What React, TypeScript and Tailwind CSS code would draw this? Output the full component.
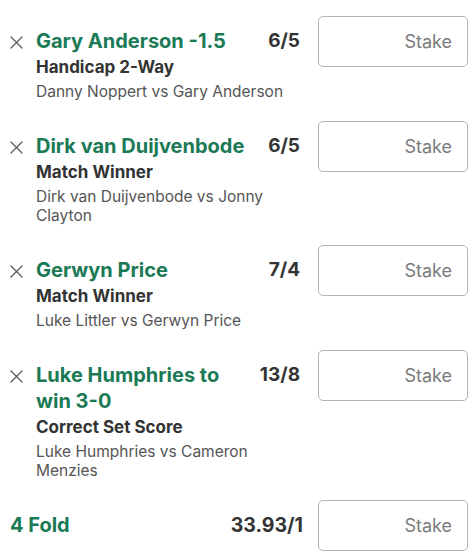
import React from "react";

type Selection = {
  title: string;
  market: string;
  event: string;
  odds: string;
};

const selections: Selection[] = [
  { title: "Gary Anderson -1.5", market: "Handicap 2-Way", event: "Danny Noppert vs Gary Anderson", odds: "6/5" },
  { title: "Dirk van Duijvenbode", market: "Match Winner", event: "Dirk van Duijvenbode vs Jonny Clayton", odds: "6/5" },
  { title: "Gerwyn Price", market: "Match Winner", event: "Luke Littler vs Gerwyn Price", odds: "7/4" },
  { title: "Luke Humphries to win 3-0", market: "Correct Set Score", event: "Luke Humphries vs Cameron Menzies", odds: "13/8" },
];

function CloseIcon() {
  return (
    <svg width="13" height="13" viewBox="0 0 13 13" fill="none" stroke="#5f5f5f" strokeWidth="1.4" strokeLinecap="round">
      <path d="M1 1 L12 12 M12 1 L1 12" />
    </svg>
  );
}

function StakeBox() {
  return (
    <div className="ml-[18px] h-[51px] w-[150px] shrink-0 rounded-[5px] border border-[#b3b3b3] bg-white">
      <input
        type="text"
        placeholder="Stake"
        className="h-full w-full bg-transparent pr-[15px] text-right text-[18px] text-[#333] outline-none placeholder:text-[#7b7b7b]"
      />
    </div>
  );
}

function SelectionRow({ s }: { s: Selection }) {
  return (
    <div className="flex items-start">
      <div className="w-[36px] shrink-0 pl-[10px] pt-[20px]">
        <CloseIcon />
      </div>
      <div className="w-[264px] shrink-0 pt-[12px] pb-[20px]">
        <div className="flex items-start">
          <div className="min-w-0 flex-1 pr-[10px] text-[20px] font-bold leading-[26px] text-[#1b7a56]">{s.title}</div>
          <div className="shrink-0 whitespace-nowrap text-right text-[19px] font-bold leading-[26px] text-[#333]">
            {s.odds}
          </div>
        </div>
        <div className="text-[17px] font-bold leading-[26px] text-[#333]">{s.market}</div>
        <div className="mt-[2px] text-[15.5px] leading-[19px] text-[#555]">{s.event}</div>
      </div>
      <StakeBox />
    </div>
  );
}

export default function App() {
  return (
    <div
      className="min-h-[560px] w-[475px] bg-white pt-[16px]"
      style={{ fontFamily: "Inter, 'Noto Sans', sans-serif" }}
    >
      {selections.map((s) => (
        <SelectionRow key={s.title} s={s} />
      ))}
      <div className="flex items-start pr-[7px]">
        <div className="flex-1 pl-[10px] pt-[12px] text-[20px] font-bold leading-[26px] text-[#1b7a56]">4 Fold</div>
        <div className="whitespace-nowrap pt-[12px] text-right text-[19.5px] font-bold leading-[26px] text-[#333]">33.93/1</div>
        <div className="-ml-[3px]">
          <StakeBox />
        </div>
      </div>
    </div>
  );
}
